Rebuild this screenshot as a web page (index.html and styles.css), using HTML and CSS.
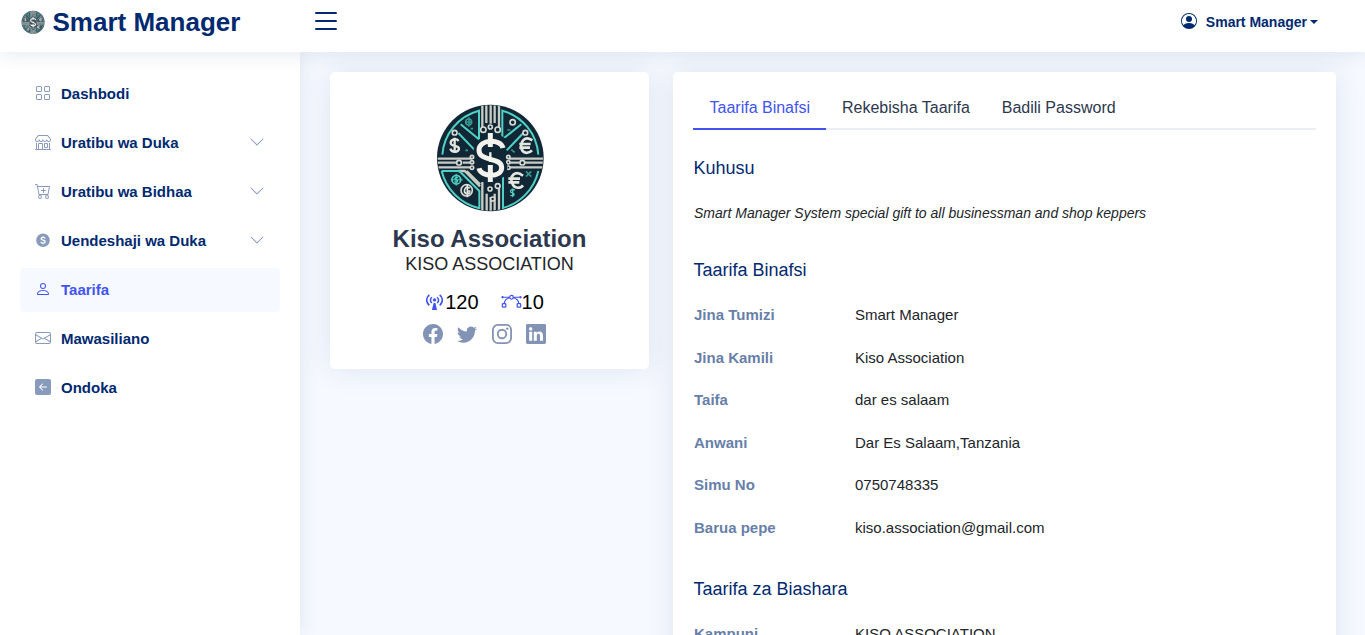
FILE: index.html
```html
<!DOCTYPE html>
<html lang="sw">
<head>
<meta charset="utf-8">
<title>Smart Manager</title>
<link rel="stylesheet" href="styles.css">
</head>
<body>
<svg class="defs" width="0" height="0">
  <symbol id="coin-art" viewBox="0 0 360 360">
    <clipPath id="disc"><circle cx="181" cy="183" r="158"/></clipPath>
    <circle cx="181" cy="183" r="160" fill="#112735"/>
    <g clip-path="url(#disc)" fill="none" stroke-width="6">
      <g stroke="#c9cbc5" stroke-width="7">
        <path d="M157 22v72M169 22v56M182 22v58M194 22v56M207 22v72M157 345v-90M170 345v-55M182 345v-45M194 345v-55M207 345v-72"/>
        <path d="M20 185h106M20 197h60m18 0h28M20 211h106M235 185h110M235 197h34m16 0h60M235 211h110"/>
        <path d="M84 222h20l46 46M110 222l40 40"/>
      </g>
      <g stroke="#4fd0c4">
        <path d="M37 173A148 148 0 0 1 147 41V127L92 82M85 108l50 52"/>
        <path d="M325 173A148 148 0 0 0 217 41V127L274 82M280 108l-50 52"/>
        <path d="M35 222h53l60 60v52A152 152 0 0 1 35 222M325 222A150 150 0 0 1 219 333V240"/>
      </g>
      <g stroke="#d7d9d3" stroke-width="5" fill="#112735">
        <circle cx="160" cy="98" r="8"/><circle cx="181" cy="90" r="6"/><circle cx="203" cy="98" r="8"/>
        <circle cx="74" cy="107" r="7"/><circle cx="286" cy="107" r="7"/><circle cx="248" cy="76" r="8"/>
        <circle cx="87" cy="197" r="7"/><circle cx="277" cy="197" r="7"/>
        <circle cx="126" cy="180" r="5"/><circle cx="126" cy="196" r="5"/><circle cx="126" cy="212" r="5"/>
        <circle cx="235" cy="180" r="5"/><circle cx="235" cy="196" r="5"/><circle cx="235" cy="212" r="5"/>
        <circle cx="180" cy="276" r="6"/><circle cx="203" cy="267" r="7"/><circle cx="188" cy="306" r="6"/>
        <circle cx="110" cy="280" r="17"/>
      </g>
      <path d="M62 248h36M79 230v36M117 61v28M105 75h20M288 223l16 16M304 223l-16 16M122 95h7M232 99h9M106 160h8M244 158l10 8" stroke="#36968f" stroke-width="5"/>
      <circle cx="79" cy="248" r="13" stroke="#4fd0c4" stroke-width="5"/>
      <circle cx="116" cy="75" r="9" stroke="#36968f" stroke-width="5"/>
      <path d="M222 140C211 116 144 124 144 160C144 198 219 173 219 213C219 248 149 246 144 215" stroke="#112735" stroke-width="26"/>
      <path d="M219 153C213 124 147 125 147 160C147 195 215 179 215 212C215 242 153 242 147 214M181 108v42M181 204v51" stroke="#f3f3ee" stroke-width="15"/>
      <path d="M181 166v28" stroke="#f3f3ee" stroke-width="7"/>
      <path d="M86 132C78 121 62 128 62 137C62 150 87 144 87 155C86 167 65 168 61 155M74 122v46" stroke="#e4e6e0" stroke-width="7"/>
      <path d="M307 130C284 115 269 134 275 157C281 172 298 169 306 160M268 141h34M268 152h32M279 236C254 216 239 240 246 257C253 279 273 273 279 265M235 245h35M235 256h33" stroke="#e4e6e0" stroke-width="8"/>
      <path d="M119 274C109 264 101 277 104 286C110 295 121 289 119 282h-9M112 261v40" stroke="#e4e6e0" stroke-width="5"/>
      <path d="M254 280C247 273 239 280 243 286C256 288 255 299 241 295M248 275v25M84 242C77 239 71 247 80 249C87 252 80 258 73 254" stroke="#4fd0c4" stroke-width="4"/>
    </g>
  </symbol>
  <symbol id="chevron" viewBox="0 0 16 16"><path fill-rule="evenodd" d="M1.646 4.646a.5.5 0 0 1 .708 0L8 10.293l5.646-5.647a.5.5 0 0 1 .708.708l-6 6a.5.5 0 0 1-.708 0l-6-6a.5.5 0 0 1 0-.708z"/></symbol>
</svg>

<header class="header">
  <a class="logo"><svg class="logo-mark"><use href="#coin-art"/></svg><span>Smart Manager</span></a>
  <svg class="menu-toggle" viewBox="0 0 16 16"><path fill-rule="evenodd" d="M2.5 12a.5.5 0 0 1 .5-.5h10a.5.5 0 0 1 0 1H3a.5.5 0 0 1-.5-.5zm0-4a.5.5 0 0 1 .5-.5h10a.5.5 0 0 1 0 1H3a.5.5 0 0 1-.5-.5zm0-4a.5.5 0 0 1 .5-.5h10a.5.5 0 0 1 0 1H3a.5.5 0 0 1-.5-.5z"/></svg>
  <a class="account">
    <svg class="icon" viewBox="0 0 16 16"><path d="M11 6a3 3 0 1 1-6 0 3 3 0 0 1 6 0z"/><path fill-rule="evenodd" d="M0 8a8 8 0 1 1 16 0A8 8 0 0 1 0 8zm8-7a7 7 0 0 0-5.468 11.37C3.242 11.226 4.805 10 8 10s4.757 1.225 5.468 2.37A7 7 0 0 0 8 1z"/></svg>
    <span>Smart Manager</span><i class="caret"></i>
  </a>
</header>

<div class="page">
  <aside class="sidebar">
    <a class="nav-link"><svg class="icon" viewBox="0 0 16 16"><path d="M1 2.5A1.5 1.5 0 0 1 2.5 1h3A1.5 1.5 0 0 1 7 2.5v3A1.5 1.5 0 0 1 5.500 7h-3A1.500 1.500 0 0 1 1 5.500v-3zM2.500 2a.5.5 0 0 0-.5.5v3a.5.5 0 0 0 .5.5h3a.5.5 0 0 0 .5-.5v-3a.5.5 0 0 0-.5-.5h-3zm6.500.5A1.500 1.500 0 0 1 10.500 1h3A1.500 1.500 0 0 1 15 2.500v3A1.500 1.500 0 0 1 13.500 7h-3A1.500 1.500 0 0 1 9 5.500v-3zm1.500-.5a.5.5 0 0 0-.5.5v3a.5.5 0 0 0 .5.5h3a.5.5 0 0 0 .5-.5v-3a.5.5 0 0 0-.5-.5h-3zM1 10.500A1.500 1.500 0 0 1 2.500 9h3A1.500 1.500 0 0 1 7 10.500v3A1.500 1.500 0 0 1 5.500 15h-3A1.500 1.500 0 0 1 1 13.500v-3zm1.500-.5a.5.5 0 0 0-.5.5v3a.5.5 0 0 0 .5.5h3a.5.5 0 0 0 .5-.5v-3a.5.5 0 0 0-.5-.5h-3zm6.500.5A1.500 1.500 0 0 1 10.500 9h3a1.500 1.500 0 0 1 1.500 1.500v3a1.500 1.500 0 0 1-1.500 1.500h-3A1.500 1.500 0 0 1 9 13.500v-3zm1.500-.5a.5.5 0 0 0-.5.5v3a.5.5 0 0 0 .5.5h3a.5.5 0 0 0 .5-.5v-3a.5.5 0 0 0-.5-.5h-3z"/></svg><span>Dashbodi</span></a>
    <a class="nav-link"><svg class="icon" viewBox="0 0 16 16"><path d="M2.970 1.350A1 1 0 0 1 3.730 1h8.540a1 1 0 0 1 .76.350l2.609 3.044A1.500 1.500 0 0 1 16 5.370v.255a2.375 2.375 0 0 1-4.250 1.458A2.371 2.371 0 0 1 9.875 8 2.370 2.370 0 0 1 8 7.083 2.370 2.370 0 0 1 6.125 8a2.370 2.370 0 0 1-1.875-.917A2.375 2.375 0 0 1 0 5.625V5.370a1.500 1.500 0 0 1 .361-.976l2.610-3.045zm1.780 4.275a1.375 1.375 0 0 0 2.750 0 .5.5 0 0 1 1 0 1.375 1.375 0 0 0 2.750 0 .5.5 0 0 1 1 0 1.375 1.375 0 1 0 2.750 0V5.370a.5.5 0 0 0-.12-.325L12.270 2H3.730L1.120 5.045A.5.5 0 0 0 1 5.370v.255a1.375 1.375 0 0 0 2.750 0 .5.5 0 0 1 1 0zM1.500 8.500A.5.5 0 0 1 2 9v6h1v-5a1 1 0 0 1 1-1h3a1 1 0 0 1 1 1v5h6V9a.5.5 0 0 1 1 0v6h.5a.5.5 0 0 1 0 1H.5a.5.5 0 0 1 0-1H1V9a.5.5 0 0 1 .5-.5zM4 15h3v-5H4v5zm5-5a1 1 0 0 1 1-1h2a1 1 0 0 1 1 1v3a1 1 0 0 1-1 1h-2a1 1 0 0 1-1-1v-3zm3 0h-2v3h2v-3z"/></svg><span>Uratibu wa Duka</span><svg class="chevron"><use href="#chevron"/></svg></a>
    <a class="nav-link"><svg class="icon" viewBox="0 0 16 16"><path d="M9 5.500a.5.5 0 0 0-1 0V7H6.500a.5.5 0 0 0 0 1H8v1.500a.5.5 0 0 0 1 0V8h1.500a.5.5 0 0 0 0-1H9V5.500z"/><path d="M.5 1a.5.5 0 0 0 0 1h1.110l.401 1.607 1.498 7.985A.5.5 0 0 0 4 12h1a2 2 0 1 0 0 4 2 2 0 0 0 0-4h7a2 2 0 1 0 0 4 2 2 0 0 0 0-4h1a.5.5 0 0 0 .491-.408l1.500-8A.5.5 0 0 0 14.500 3H2.890l-.405-1.621A.5.5 0 0 0 2 1H.5zm3.915 10L3.102 4h10.796l-1.313 7h-8.170zM6 14a1 1 0 1 1-2 0 1 1 0 0 1 2 0zm7 0a1 1 0 1 1-2 0 1 1 0 0 1 2 0z"/></svg><span>Uratibu wa Bidhaa</span><svg class="chevron"><use href="#chevron"/></svg></a>
    <a class="nav-link"><svg class="icon" viewBox="0 0 16 16"><circle cx="8" cy="8.200" r="6.800"/><path d="M10.100 6.500C9.700 5 6.100 5 6.100 6.800s4.100 1 4.100 2.900c0 1.700-4 1.800-4.400.1M8 4.300v1.200M8 11v1.200" fill="none" stroke="#fff" stroke-width="1.300"/></svg><span>Uendeshaji wa Duka</span><svg class="chevron"><use href="#chevron"/></svg></a>
    <a class="nav-link active"><svg class="icon" viewBox="0 0 16 16"><path d="M8 8a3 3 0 1 0 0-6 3 3 0 0 0 0 6zm2-3a2 2 0 1 1-4 0 2 2 0 0 1 4 0zm4 8c0 1-1 1-1 1H3s-1 0-1-1 1-4 6-4 6 3 6 4zm-1-.004c-.001-.246-.154-.986-.832-1.664C11.516 10.680 10.289 10 8 10c-2.290 0-3.516.680-4.168 1.332-.678.678-.830 1.418-.832 1.664h10z"/></svg><span>Taarifa</span></a>
    <a class="nav-link"><svg class="icon" viewBox="0 0 16 16"><path d="M0 4a2 2 0 0 1 2-2h12a2 2 0 0 1 2 2v8a2 2 0 0 1-2 2H2a2 2 0 0 1-2-2V4zm2-1a1 1 0 0 0-1 1v.217l7 4.200 7-4.200V4a1 1 0 0 0-1-1H2zm13 2.383-4.708 2.825L15 11.105V5.383zm-.034 6.876-5.640-3.471L8 9.583l-1.326-.795-5.640 3.470A1 1 0 0 0 2 13h12a1 1 0 0 0 .966-.741zM1 11.105l4.708-2.897L1 5.383v5.722z"/></svg><span>Mawasiliano</span></a>
    <a class="nav-link"><svg class="icon" viewBox="0 0 16 16"><path d="M16 14a2 2 0 0 1-2 2H2a2 2 0 0 1-2-2V2a2 2 0 0 1 2-2h12a2 2 0 0 1 2 2v12zm-4.500-6.500H5.707l2.147-2.146a.5.5 0 1 0-.708-.708l-3 3a.5.5 0 0 0 0 .708l3 3a.5.5 0 0 0 .708-.708L5.707 8.500H11.500a.5.5 0 0 0 0-1z"/></svg><span>Ondoka</span></a>
  </aside>

  <main class="main">
    <section class="card profile">
      <svg class="avatar"><use href="#coin-art"/></svg>
      <h2>Kiso Association</h2>
      <h3>KISO ASSOCIATION</h3>
      <div class="stats">
        <span class="stat"><svg class="stat-icon antenna" viewBox="0 0 18 18"><g fill="none" stroke="currentColor" stroke-width="1.700"><path d="M3.500 2C-.2 5.200-.2 9.800 3.500 13M14.500 2c3.700 3.200 3.700 7.800 0 11M6.200 4.500c-2 1.800-2 4.300 0 6.100M11.800 4.500c2 1.800 2 4.300 0 6.100"/></g><circle cx="9" cy="7.300" r="1.800"/><path d="M8 10.500h2l1.700 7.500H6.300z"/></svg>120</span>
        <span class="stat"><svg class="stat-icon bezier" viewBox="0 0 22 18"><g fill="none" stroke="currentColor" stroke-width="1.300"><path d="M2 4.500h7M13 4.500h7M9 5C5 6 3.500 8 3.200 11.500M13 5c4 1 5.500 3 5.800 6.500"/><circle cx="11" cy="4.500" r="1.900"/><rect x="1.300" y="11.300" width="3.700" height="3.700" rx=".8"/><rect x="17" y="11.300" width="3.700" height="3.700" rx=".8"/></g><circle cx="1.500" cy="4.500" r="1.200"/><circle cx="20.500" cy="4.500" r="1.200"/></svg>10</span>
      </div>
      <div class="social">
        <svg viewBox="0 0 16 16"><path d="M16 8.049c0-4.446-3.582-8.050-8-8.050C3.580 0-.002 3.603-.002 8.050c0 4.017 2.926 7.347 6.750 7.951v-5.625h-2.030V8.050H6.750V6.275c0-2.017 1.195-3.131 3.022-3.131.876 0 1.791.157 1.791.157v1.980h-1.009c-.993 0-1.303.621-1.303 1.258v1.510h2.218l-.354 2.326H9.250V16c3.824-.604 6.750-3.934 6.750-7.951z"/></svg>
        <svg viewBox="0 0 16 16"><path d="M5.026 15c6.038 0 9.341-5.003 9.341-9.334 0-.140 0-.282-.006-.422A6.685 6.685 0 0 0 16 3.542a6.658 6.658 0 0 1-1.889.518 3.301 3.301 0 0 0 1.447-1.817 6.533 6.533 0 0 1-2.087.793A3.286 3.286 0 0 0 7.875 6.030a9.325 9.325 0 0 1-6.767-3.429 3.289 3.289 0 0 0 1.018 4.382A3.323 3.323 0 0 1 .640 6.575v.045a3.288 3.288 0 0 0 2.632 3.218 3.203 3.203 0 0 1-.865.115 3.230 3.230 0 0 1-.614-.057 3.283 3.283 0 0 0 3.067 2.277A6.588 6.588 0 0 1 .780 13.580a6.320 6.320 0 0 1-.780-.045A9.344 9.344 0 0 0 5.026 15z"/></svg>
        <svg viewBox="0 0 16 16"><g fill="none" stroke="currentColor" stroke-width="1.440"><rect x=".72" y=".72" width="14.560" height="14.560" rx="4"/><circle cx="8" cy="8" r="3.390"/></g><circle cx="12.270" cy="3.730" r=".96"/></svg>
        <svg viewBox="0 0 16 16"><path d="M0 1.146C0 .513.526 0 1.175 0h13.650C15.474 0 16 .513 16 1.146v13.708c0 .633-.526 1.146-1.175 1.146H1.175C.526 16 0 15.487 0 14.854V1.146zm4.943 12.248V6.169H2.542v7.225h2.401zm-1.200-8.212c.837 0 1.358-.554 1.358-1.248-.015-.709-.520-1.248-1.342-1.248-.822 0-1.359.540-1.359 1.248 0 .694.521 1.248 1.327 1.248h.016zm4.908 8.212V9.359c0-.216.016-.432.080-.586.173-.431.568-.878 1.232-.878.869 0 1.216.662 1.216 1.634v3.865h2.401V9.250c0-2.220-1.184-3.252-2.764-3.252-1.274 0-1.845.700-2.165 1.193v.025h-.016a5.540 5.540 0 0 1 .016-.025V6.169h-2.400c.030.678 0 7.225 0 7.225h2.400z"/></svg>
      </div>
    </section>

    <section class="card details">
      <nav class="tabs"><a class="tab active">Taarifa Binafsi</a><a class="tab">Rekebisha Taarifa</a><a class="tab">Badili Password</a></nav>
      <h5>Kuhusu</h5>
      <p class="about">Smart Manager System special gift to all businessman and shop keppers</p>
      <h5>Taarifa Binafsi</h5>
      <dl>
        <dt>Jina Tumizi</dt><dd>Smart Manager</dd>
        <dt>Jina Kamili</dt><dd>Kiso Association</dd>
        <dt>Taifa</dt><dd>dar es salaam</dd>
        <dt>Anwani</dt><dd>Dar Es Salaam,Tanzania</dd>
        <dt>Simu No</dt><dd>0750748335</dd>
        <dt>Barua pepe</dt><dd>kiso.association@gmail.com</dd>
      </dl>
      <h5 class="business">Taarifa za Biashara</h5>
      <dl>
        <dt>Kampuni</dt><dd>KISO ASSOCIATION</dd>
      </dl>
    </section>
  </main>
</div>
</body>
</html>
```
FILE: styles.css
```css
* { box-sizing: border-box; }
body {
  margin: 0;
  height: 635px;
  overflow: hidden;
  display: flex;
  flex-direction: column;
  background: #f6f9ff;
  color: #212529;
  font-family: "Liberation Sans", Arial, sans-serif;
}
svg { display: block; fill: currentColor; flex: none; }
.defs { position: absolute; }
h2, h3, h5, p, dl, dd { margin: 0; }

.header {
  height: 52px;
  flex: none;
  display: flex;
  align-items: center;
  padding: 0 47px 8px 20px;
  background: #fff;
  color: #012970;
  box-shadow: 0 2px 20px rgba(1, 41, 112, .1);
  z-index: 3;
}
.logo { display: flex; align-items: center; width: 280px; font-size: 26px; font-weight: 700; line-height: 30px; }
.logo-mark { width: 26px; height: 26px; margin-right: 6.5px; opacity: .8; }
.menu-toggle { width: 32px; height: 32px; margin: 0 0 2px 10px; }
.account { display: flex; align-items: center; margin-left: auto; font-size: 14px; font-weight: 700; }
.account .icon { width: 16px; height: 16px; margin: 0 9px 2px 0; }
.caret { margin-left: 3px; border: 4px solid transparent; border-top-color: currentColor; border-bottom: 0; }

.page { flex: 1; min-height: 0; display: flex; }
.sidebar {
  width: 300px;
  flex: none;
  padding: 20px;
  display: flex;
  flex-direction: column;
  gap: 5px;
  background: #fff;
  box-shadow: 0 0 20px rgba(1, 41, 112, .1);
  z-index: 2;
}
.nav-link {
  height: 44px;
  flex: none;
  display: flex;
  align-items: center;
  padding: 0 15px;
  border-radius: 4px;
  color: #012970;
  font-size: 15px;
  font-weight: 700;
}
.nav-link span { padding-bottom: 2px; }
.nav-link .icon { width: 16px; height: 16px; margin: 0 10px 2px 0; color: #899bbd; }
.nav-link.active, .nav-link.active .icon { color: #4154f1; }
.nav-link.active { background: #f6f9ff; }
.chevron { width: 16px; height: 16px; margin: 0 0 2px auto; color: #899bbd; }

.main { flex: 1; min-height: 0; display: flex; align-items: flex-start; gap: 24px; padding: 20px 29px 0 30px; }
.card { background: #fff; border-radius: 5px; box-shadow: 0 0 30px rgba(1, 41, 112, .1); }
.profile { width: 319px; height: 297px; flex: none; display: flex; flex-direction: column; align-items: center; padding-top: 25px; }
.avatar { width: 120px; height: 120px; }
.profile h2 { margin-top: 7px; color: #2c384e; font-size: 24px; line-height: 29px; }
.profile h3 { font-size: 18px; font-weight: 400; line-height: 22px; }
.stats { display: flex; gap: 22px; margin: 15px 9px 0 0; color: #000; font-size: 20px; line-height: 24px; }
.stat { display: flex; align-items: center; }
.stat-icon { color: #4154f1; }
.antenna { width: 17px; height: 17px; margin: 0 2px 1px 0; }
.bezier { width: 21px; height: 17px; margin-bottom: 1px; }
.social { display: flex; gap: 14.5px; margin: 10px 10px 0 0; color: #8293b6; }
.social svg { width: 20px; height: 20px; }

.details { flex: 1; height: 700px; padding: 14px 20px 20px; }
.tabs { display: flex; height: 44px; border-bottom: 2px solid #ebeef4; }
.tab { height: 44px; padding: 0 15.5px 0 16.5px; border-bottom: 2px solid transparent; color: #2c384e; font-size: 16px; line-height: 43px; }
.tab.active { color: #4154f1; border-bottom-color: #4154f1; }
.details h5 { margin-top: 27px; color: #012970; font-size: 18px; font-weight: 400; line-height: 22px; padding-left: .5px; }
.about { margin-top: 24px; padding: 0 0 0 1px; font-size: 14px; font-style: italic; line-height: 21px; }
.details .about + h5 { margin-top: 35px; }
dl { display: grid; grid-template-columns: 161px 1fr; row-gap: 20px; margin-top: 23px; padding-left: 1px; font-size: 15px; line-height: 22.5px; }
dt { color: #677fa9; font-weight: 700; }
.details .business { margin-top: 39px; }
```
